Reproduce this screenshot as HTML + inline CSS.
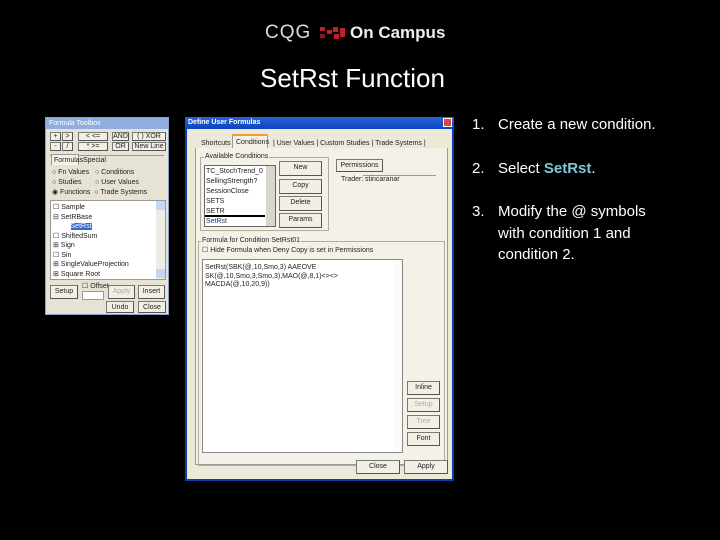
<!DOCTYPE html>
<html><head><meta charset="utf-8"><style>
*{margin:0;padding:0;box-sizing:border-box}
body{width:720px;height:540px;background:#000;position:relative;overflow:hidden;font-family:"Liberation Sans",sans-serif}
.a{position:absolute}
.t{font-size:7px;color:#222;white-space:nowrap;line-height:8px}
.btn{position:absolute;background:#f2f0e6;border:1px solid #7a7a70;border-right-color:#555;border-bottom-color:#555;font-size:7px;color:#222;text-align:center;line-height:12px}
.grp{position:absolute;border:1px solid #b0ad9c}
.wh{position:absolute;background:#fff;border:1px solid #7f9db9}
</style></head><body>
<!-- logo -->
<div class="a" style="left:265px;top:22px;font-size:19px;color:#ddd;letter-spacing:1px;line-height:22px">CQG</div>
<svg class="a" style="left:320px;top:25px" width="26" height="16">
<rect x="0" y="2" width="5" height="4" fill="#c0202a"/><rect x="7" y="5" width="5" height="4" fill="#c0202a"/><rect x="0" y="9" width="5" height="4" fill="#8a1a20"/><rect x="13" y="2" width="5" height="5" fill="#c0202a"/><rect x="14" y="9" width="5" height="5" fill="#c0202a"/><rect x="20" y="3" width="5" height="9" fill="#c0202a"/></svg>
<div class="a" style="left:350px;top:22px;font-size:17px;font-weight:bold;color:#eee;line-height:22px">On Campus</div>
<div class="a" style="left:260px;top:62px;font-size:26px;color:#fff;line-height:32px">SetRst Function</div>
<!-- instructions -->
<div class="a" style="left:472px;top:114px;font-size:15px;color:#fff;line-height:21.5px">
<div style="position:absolute;left:0;top:0">1.</div><div style="position:absolute;left:26px;top:0;white-space:nowrap">Create a new condition.</div>
<div style="position:absolute;left:0;top:44px">2.</div><div style="position:absolute;left:26px;top:44px;white-space:nowrap">Select <b style="color:#7ec8d8">SetRst</b>.</div>
<div style="position:absolute;left:0;top:87px">3.</div><div style="position:absolute;left:26px;top:87px;white-space:nowrap">Modify the @ symbols<br>with condition 1 and<br>condition 2.</div>
</div>
<!-- toolbox -->
<div class="a" style="left:45px;top:117px;width:124px;height:198px;background:#e6e3d4;border:1px solid #8aa0c8">
<div class="a" style="left:0;top:0;width:122px;height:11px;background:#8eaee0"><span class="t" style="color:#fff;position:absolute;left:3px;top:2px">Formula Toolbox</span></div>
<div class="btn" style="left:4px;top:14px;width:11px;height:9px;line-height:8px">+</div><div class="btn" style="left:16px;top:14px;width:11px;height:9px;line-height:8px">&gt;</div>
<div class="btn" style="left:4px;top:24px;width:11px;height:9px;line-height:8px">-</div><div class="btn" style="left:16px;top:24px;width:11px;height:9px;line-height:8px">/</div>
<div class="btn" style="left:32px;top:14px;width:30px;height:9px;line-height:8px">&lt; &lt;=</div><div class="btn" style="left:32px;top:24px;width:30px;height:9px;line-height:8px">* &gt;=</div>
<div class="btn" style="left:66px;top:14px;width:17px;height:9px;line-height:8px">AND</div><div class="btn" style="left:66px;top:24px;width:17px;height:9px;line-height:8px">OR</div>
<div class="btn" style="left:86px;top:14px;width:34px;height:9px;line-height:8px">( ) XOR</div><div class="btn" style="left:86px;top:24px;width:34px;height:9px;line-height:8px">New Line</div>
<div class="a" style="left:4px;top:37px;width:114px;border-top:1px solid #999"></div>
<div class="a" style="left:5px;top:36px;width:28px;height:11px;background:#f4f2e8;border:1px solid #999;border-bottom:none"><span class="t" style="position:absolute;left:2px;top:2px">Formulas</span></div>
<div class="t a" style="left:37px;top:39px">Special</div>
<div class="t a" style="left:6px;top:51px">○ Fn Values&nbsp;&nbsp;&nbsp;○ Conditions</div>
<div class="t a" style="left:6px;top:61px">○ Studies&nbsp;&nbsp;&nbsp;&nbsp;&nbsp;&nbsp;&nbsp;○ User Values</div>
<div class="t a" style="left:6px;top:71px">◉ Functions&nbsp;&nbsp;○ Trade Systems</div>
<div class="wh" style="left:4px;top:82px;width:116px;height:80px;border-color:#999">
<div class="t a" style="left:2px;top:2px;line-height:9.5px">☐ Sample<br>⊟ SetRBase<br>&nbsp;&nbsp;&nbsp;&nbsp;&nbsp;&nbsp;&nbsp;&nbsp;&nbsp;<span style="background:#316ac5;color:#fff">SetRst</span><br>☐ ShiftedSum<br>⊞ Sign<br>☐ Sin<br>⊞ SingleValueProjection<br>⊞ Square Root</div>
<div class="a" style="right:0;top:0;width:9px;height:78px;background:#eeede5"><div class="a" style="left:0;top:0;width:9px;height:9px;background:#c5d5f5"></div><div class="a" style="left:0;top:68px;width:9px;height:9px;background:#c5d5f5"></div></div>
</div>
<div class="btn" style="left:4px;top:167px;width:28px;height:14px">Setup</div>
<div class="t a" style="left:36px;top:165px">☐ Offset</div>
<div class="a" style="left:36px;top:173px;width:22px;height:9px;background:#fff;border:1px solid #999"></div>
<div class="btn" style="left:62px;top:167px;width:27px;height:14px;color:#aaa">Apply</div>
<div class="btn" style="left:92px;top:167px;width:27px;height:14px">Insert</div>
<div class="btn" style="left:60px;top:183px;width:28px;height:12px">Undo</div>
<div class="btn" style="left:92px;top:183px;width:28px;height:12px">Close</div>
</div>
<!-- define dialog -->
<div class="a" style="left:185px;top:117px;width:269px;height:364px;background:#ece9d8;border:2px solid #0a3fb0;border-top:none">
<div class="a" style="left:-2px;top:0;width:269px;height:12px;background:linear-gradient(#2a62d8,#0a44c0)"><span class="t" style="color:#fff;position:absolute;left:3px;top:2px;font-weight:bold">Define User Formulas</span><div class="a" style="right:2px;top:1px;width:9px;height:9px;background:#d44;border:1px solid #fff"></div></div>
<div class="a" style="left:8px;top:19px;width:253px;height:329px;border:1px solid #999;background:#f4f2e8"></div>
<div class="a" style="left:8px;top:19px;width:253px;height:12px;background:#ece9d8"></div>
<div class="t a" style="left:14px;top:23px">Shortcuts</div>
<div class="a" style="left:45px;top:17px;width:36px;height:14px;background:#f4f2e8;border:1px solid #999;border-bottom:none;border-top:2px solid #f0a030"><span class="t" style="position:absolute;left:3px;top:3px">Conditions</span></div>
<div class="t a" style="left:86px;top:23px">| User Values | Custom Studies | Trade Systems |</div>
<div class="grp" style="left:13px;top:40px;width:129px;height:74px"></div>
<span class="t a" style="left:17px;top:36px;background:#f4f2e8;padding:0 1px">Available Conditions</span>
<div class="wh" style="left:17px;top:48px;width:72px;height:62px;border-color:#666">
<div class="t a" style="left:1px;top:1px;line-height:10px">TC_StochTrend_0<br>SellingStrength?<br>SessionClose<br>SETS<br>SETR<br><span style="color:#236">SetRst</span></div>
<div class="a" style="left:0;top:49px;width:60px;border-top:2px solid #000"></div>
<div class="a" style="right:0;top:0;width:9px;height:60px;background:#d8d6cc"></div>
</div>
<div class="btn" style="left:92px;top:44px;width:43px;height:15px">New</div>
<div class="btn" style="left:92px;top:62px;width:43px;height:15px">Copy</div>
<div class="btn" style="left:92px;top:79px;width:43px;height:15px">Delete</div>
<div class="btn" style="left:92px;top:96px;width:43px;height:15px">Params</div>
<div class="btn" style="left:149px;top:42px;width:47px;height:13px">Permissions</div>
<div class="t a" style="left:154px;top:59px">Trader:</div>
<div class="a" style="left:176px;top:58px;width:73px;height:9px;border-top:1px solid #999"><span class="t" style="position:absolute;left:2px;top:0">stincaranar</span></div>
<div class="grp" style="left:11px;top:124px;width:247px;height:225px"></div>
<span class="t a" style="left:14px;top:120px;background:#f4f2e8;padding:0 1px">Formula for Condition SetRst01</span>
<div class="t a" style="left:15px;top:130px">☐ Hide Formula when Deny Copy is set in Permissions</div>
<div class="wh" style="left:15px;top:142px;width:201px;height:194px;border-color:#888">
<div class="t a" style="left:2px;top:4px;line-height:8.5px">SetRst(SBK(@,10,Smo,3) AAEOVE<br>SK(@,10,Smo,3,Smo,3),MAO(@,8,1)&lt;&gt;&lt;&gt;<br>MACDA(@,10,20,9))</div>
<div class="a" style="right:0;top:0;width:9px;height:192px;background:#fafaf6"></div>
</div>
<div class="btn" style="left:220px;top:264px;width:33px;height:14px">Inline</div>
<div class="btn" style="left:220px;top:281px;width:33px;height:14px;color:#aaa">Setup</div>
<div class="btn" style="left:220px;top:298px;width:33px;height:14px;color:#aaa">Tree</div>
<div class="btn" style="left:220px;top:315px;width:33px;height:14px">Font</div>
<div class="btn" style="left:169px;top:343px;width:44px;height:14px">Close</div>
<div class="btn" style="left:217px;top:343px;width:44px;height:14px">Apply</div>
</div>
</body></html>
